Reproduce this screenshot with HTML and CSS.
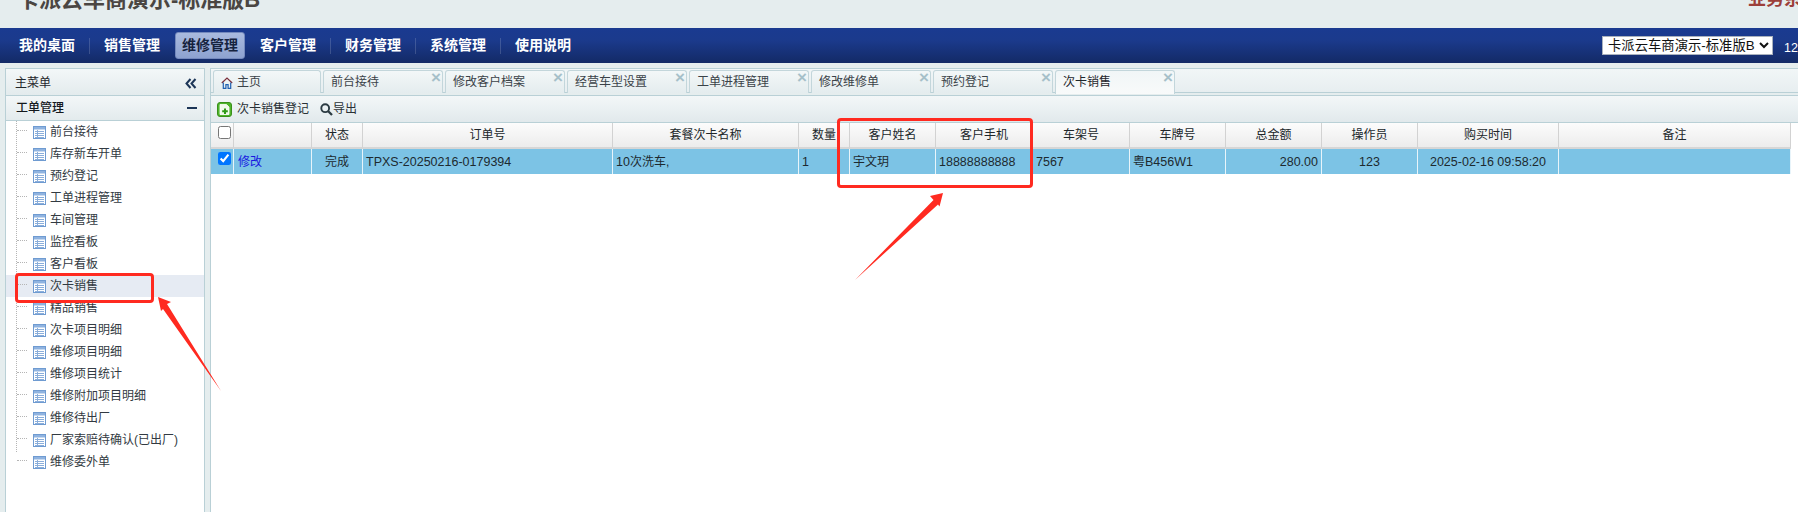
FILE: index.html
```html
<!DOCTYPE html>
<html lang="zh-CN">
<head>
<meta charset="utf-8">
<title>次卡销售</title>
<link rel="stylesheet" href="styles.css">
</head>
<body>
<svg class="defs" width="0" height="0" aria-hidden="true">
  <symbol id="grid" viewBox="0 0 13 13">
    <rect x="0.5" y="0.5" width="12" height="12" fill="#fff" stroke="#6f9bd1"/>
    <rect x="1" y="1" width="11" height="2.5" fill="#8fb3e0"/>
    <path d="M2 5.5h9M2 7.5h9M2 9.5h9M2 11.5h9M4.5 4v8" stroke="#8aaedb" stroke-width="1" fill="none"/>
  </symbol>
</svg>

<header class="top">
  <div class="brand">卡派云车商演示-标准版B</div>
  <div class="system">业务系统</div>
</header>

<nav class="nav">
  <div class="nav-links">
    <a class="nav-item">我的桌面</a><i class="nav-sep"></i>
    <a class="nav-item">销售管理</a>
    <a class="nav-item active">维修管理</a>
    <a class="nav-item">客户管理</a><i class="nav-sep"></i>
    <a class="nav-item">财务管理</a><i class="nav-sep"></i>
    <a class="nav-item">系统管理</a><i class="nav-sep"></i>
    <a class="nav-item">使用说明</a>
  </div>
  <div class="nav-right">
    <select class="shop"><option>卡派云车商演示-标准版B</option></select>
    <span class="user">123</span>
  </div>
</nav>

<div class="content">
  <aside class="side">
    <div class="side-head">
      <span>主菜单</span>
      <svg class="collapse" width="12" height="11" viewBox="0 0 12 11"><path d="M5.5 1 1.5 5.5 5.5 10M10.5 1 6.5 5.5 10.5 10" fill="none" stroke="#1c3557" stroke-width="2"/></svg>
    </div>
    <div class="side-group">
      <span>工单管理</span>
      <i class="minus"></i>
    </div>
    <ul class="tree">
      <li><svg class="ico"><use href="#grid"/></svg>前台接待</li>
      <li><svg class="ico"><use href="#grid"/></svg>库存新车开单</li>
      <li><svg class="ico"><use href="#grid"/></svg>预约登记</li>
      <li><svg class="ico"><use href="#grid"/></svg>工单进程管理</li>
      <li><svg class="ico"><use href="#grid"/></svg>车间管理</li>
      <li><svg class="ico"><use href="#grid"/></svg>监控看板</li>
      <li><svg class="ico"><use href="#grid"/></svg>客户看板</li>
      <li class="current"><svg class="ico"><use href="#grid"/></svg>次卡销售</li>
      <li><svg class="ico"><use href="#grid"/></svg>精品销售</li>
      <li><svg class="ico"><use href="#grid"/></svg>次卡项目明细</li>
      <li><svg class="ico"><use href="#grid"/></svg>维修项目明细</li>
      <li><svg class="ico"><use href="#grid"/></svg>维修项目统计</li>
      <li><svg class="ico"><use href="#grid"/></svg>维修附加项目明细</li>
      <li><svg class="ico"><use href="#grid"/></svg>维修待出厂</li>
      <li><svg class="ico"><use href="#grid"/></svg>厂家索赔待确认(已出厂)</li>
      <li><svg class="ico"><use href="#grid"/></svg>维修委外单</li>
    </ul>
  </aside>

  <main class="main">
    <div class="tabs">
      <div class="tab home">
        <svg width="12" height="12" viewBox="0 0 12 12"><path d="M0.8 6 6 1l5.2 5" fill="none" stroke="#7a2e3a" stroke-width="1.2"/><path d="M2.3 5.5v5.8h2.6V7.6h2.2v3.700h2.600V5.500" fill="none" stroke="#1f5fb0" stroke-width="1.2"/></svg>
        <span>主页</span>
      </div>
      <div class="tab">前台接待<b class="x">×</b></div>
      <div class="tab">修改客户档案<b class="x">×</b></div>
      <div class="tab">经营车型设置<b class="x">×</b></div>
      <div class="tab">工单进程管理<b class="x">×</b></div>
      <div class="tab">修改维修单<b class="x">×</b></div>
      <div class="tab">预约登记<b class="x">×</b></div>
      <div class="tab on">次卡销售<b class="x">×</b></div>
    </div>
    <div class="band"></div>
    <div class="toolbar">
      <svg class="add" width="15" height="15" viewBox="0 0 15 15">
        <rect x="0.5" y="0.5" width="14" height="14" rx="2.5" fill="#4fb52b" stroke="#3a8f1c"/>
        <path d="M3 2.500h6.500l2.500 2.500v7.500H3z" fill="#f1faec" stroke="#fff" stroke-width="0.8"/>
        <path d="M8 6.500v5.500M5.200 9.200h5.600" stroke="#2f9a17" stroke-width="2"/>
      </svg>
      <span class="tool-label">次卡销售登记</span>
      <svg class="search" width="13" height="13" viewBox="0 0 13 13"><circle cx="5.2" cy="5.2" r="3.9" fill="none" stroke="#2b3a42" stroke-width="1.9"/><path d="M8 8l4 4" stroke="#2b3a42" stroke-width="2.3"/></svg>
      <span>导出</span>
    </div>
    <table class="grid">
      <colgroup>
        <col class="w23"><col class="w78"><col class="w51"><col class="w250"><col class="w186"><col class="w51"><col class="w86"><col class="w97"><col class="w97"><col class="w96"><col class="w96"><col class="w96"><col class="w141"><col class="w232">
      </colgroup>
      <thead>
        <tr>
          <th class="chk"><input type="checkbox"></th>
          <th></th><th>状态</th><th>订单号</th><th>套餐次卡名称</th><th>数量</th><th>客户姓名</th><th>客户手机</th><th>车架号</th><th>车牌号</th><th>总金额</th><th>操作员</th><th>购买时间</th><th>备注</th>
        </tr>
      </thead>
      <tbody>
        <tr>
          <td class="chk"><input type="checkbox" checked></td>
          <td class="link">修改</td>
          <td class="mid">完成</td>
          <td class="lat">TPXS-20250216-0179394</td>
          <td><span class="lat">10</span>次洗车,</td>
          <td class="lat">1</td>
          <td>宇文玥</td>
          <td class="lat">18888888888</td>
          <td class="lat">7567</td>
          <td>粤<span class="lat">B456W1</span></td>
          <td class="lat end">280.00</td>
          <td class="lat mid">123</td>
          <td class="lat mid">2025-02-16 09:58:20</td>
          <td></td>
        </tr>
      </tbody>
    </table>
  </main>
</div>

<div class="mark mark-side"></div>
<div class="mark mark-cols"></div>
<svg class="arrows" width="1798" height="512" viewBox="0 0 1798 512" aria-hidden="true">
  <path d="M158 297 171 302 167 304 221 391 163 309 161 311Z" fill="#ff2a20"/>
  <path d="M943 193 930 196 933.500 200 855 280 938 204.500 939.500 206.500Z" fill="#ff2a20"/>
</svg>
</body>
</html>
```
FILE: styles.css
```css
* { box-sizing: border-box; }
html, body { margin: 0; height: 512px; overflow: hidden; }
body {
  position: relative;
  display: flex;
  flex-direction: column;
  background: #e5edee;
  color: #2a3136;
  font: 12px/1.2 "Liberation Sans", "Noto Sans CJK SC", sans-serif;
}
.defs { position: absolute; }

.top {
  flex: 0 0 28px;
  display: flex;
  justify-content: space-between;
  overflow: hidden;
  padding-left: 17px;
  background: #e5edee;
  font-weight: 700;
  white-space: nowrap;
}
.brand { margin-top: -15px; font-size: 22px; line-height: 30px; color: #4a4642; }
.system { margin-top: -16px; margin-right: -22px; font-size: 18px; line-height: 30px; color: #9c3f3a; }

.nav {
  flex: 0 0 35px;
  display: flex;
  justify-content: space-between;
  align-items: center;
  padding-left: 12px;
  overflow: hidden;
  background: linear-gradient(#1a3a90 0%, #1b3a8c 35%, #132a66 100%);
}
.nav-links { display: flex; align-items: center; gap: 7px; }
.nav-item {
  width: 70px;
  height: 27px;
  border: 1px solid transparent;
  border-radius: 3px;
  color: #fff;
  font-size: 14px;
  font-weight: 700;
  line-height: 25px;
  text-align: center;
}
.nav-item.active {
  margin: 0 1px;
  background: linear-gradient(#a9bade, #8da2d0);
  border-color: #7489bd;
  color: #16233f;
}
.nav-sep { width: 1px; height: 16px; background: rgba(255, 255, 255, .16); }
.nav-right { width: 196px; flex: none; display: flex; align-items: center; gap: 11px; }
.shop {
  flex: none;
  width: 171px;
  height: 19px;
  padding: 0 0 0 1px;
  border: 1px solid #a9b1bd;
  border-radius: 0;
  background-color: #fff;
  color: #111;
  font: 13.33px "Liberation Sans", "Noto Sans CJK SC", sans-serif;
}
.user { flex: none; margin-top: 5px; color: #fff; font-size: 12.5px; }

.content { flex: 1; display: flex; gap: 5px; padding: 5px 0 0 5px; min-height: 0; }

.side {
  flex: 0 0 200px;
  border: 1px solid #b9d0d6;
  border-bottom: 0;
  background: #fff;
}
.side-head, .side-group {
  display: flex;
  justify-content: space-between;
  align-items: center;
  background: linear-gradient(#f3f7f8, #e3ebed);
  border-bottom: 1px solid #b9d0d6;
}
.side-head { height: 27px; padding: 2px 7px 0 9px; color: #1f262b; }
.side-group { height: 25px; padding: 0 7px 0 10px; font-size: 12px; font-weight: 500; color: #14191d; }
.minus { width: 10px; height: 2px; background: #1c3557; }

.tree {
  position: relative;
  margin: 0;
  padding: 0;
  list-style: none;
}
.tree::before {
  content: "";
  position: absolute;
  left: 10px;
  top: 0;
  height: 331px;
  border-left: 1px dotted #b5b5b5;
}
.tree li {
  position: relative;
  display: flex;
  align-items: center;
  height: 22px;
  padding: 1px 0 0 27px;
  color: #323a42;
}
.tree li::before {
  content: "";
  position: absolute;
  left: 11px;
  top: 9px;
  width: 10px;
  border-top: 1px dotted #b5b5b5;
}
.tree li.current { background: #e6ebf3; }
.ico { flex: none; width: 13px; height: 13px; margin-right: 4px; }

.main {
  flex: 1;
  min-width: 0;
  border-left: 1px solid #b9d0d6;
  border-top: 1px solid #b9d0d6;
  background: #fff;
}
.tabs {
  display: flex;
  gap: 2px;
  height: 24px;
  padding: 1px 0 0 2px;
  background: linear-gradient(#f1f6f7, #e7eef0);
  border-bottom: 1px solid #b9d0d6;
}
.tab {
  position: relative;
  flex: 0 0 120px;
  height: 23px;
  padding: 4px 0 0 7px;
  border: 1px solid #c3d6db;
  border-bottom: 0;
  border-radius: 3px 3px 0 0;
  background: linear-gradient(#f3f7f8, #e4ecee);
  color: #3a4248;
}
.tab.home { flex-basis: 108px; display: flex; align-items: flex-start; gap: 4px; }
.tab.home svg { margin-top: 2px; }
.tab.on { height: 24px; background: linear-gradient(#f1f6f7, #f8fafa); color: #1e262b; }
.x {
  position: absolute;
  right: 1px;
  top: -1px;
  color: #a6c0c9;
  font-size: 17px;
  font-weight: 700;
  line-height: 15px;
}
.band { height: 2px; background: #e5edee; }
.toolbar {
  display: flex;
  align-items: center;
  height: 28px;
  padding: 1px 0 0 6px;
  border-top: 1px solid #b9d0d6;
  border-bottom: 1px solid #b9d0d6;
  background: linear-gradient(#f3f7f8, #e1e9ec);
  color: #2a3136;
}
.add { margin-right: 5px; }
.tool-label { margin-right: 11px; }

.grid { width: 1579px; table-layout: fixed; border-collapse: separate; border-spacing: 0; }
.w23 { width: 23px; }
.w78 { width: 78px; }
.w51 { width: 51px; }
.w250 { width: 250px; }
.w186 { width: 186px; }
.w86 { width: 86px; }
.w97 { width: 97px; }
.w96 { width: 96px; }
.w141 { width: 141px; }
.w232 { width: 232px; }
.grid th {
  height: 26px;
  padding: 1px 0 0;
  border-right: 1px solid #d2d2d2;
  border-bottom: 2px solid #d6d6d6;
  background: linear-gradient(#fcfcfc, #ececec);
  color: #20262a;
  font-weight: 400;
}
.grid td {
  height: 25px;
  padding: 1px 3px 0;
  border-right: 1px solid #e8f4fa;
  background: #7cc3e5;
  color: #1d2a30;
  white-space: nowrap;
}
.grid td.lat, .lat { font-size: 12.5px; }
.grid .chk { padding: 0; vertical-align: top; }
.chk input { display: block; width: 13px; height: 13px; margin: 3px 0 0 7px; }
.grid td.link { padding-left: 4px; color: #1818e0; }
.grid td.mid { text-align: center; }
.grid td.end { text-align: right; padding-right: 3px; }

.mark {
  position: absolute;
  border: 3px solid #ff2a20;
  border-radius: 4px;
}
.mark-side { left: 15px; top: 273px; width: 139px; height: 30px; }
.mark-cols { left: 837px; top: 118px; width: 196px; height: 70px; }
.arrows { position: absolute; left: 0; top: 0; pointer-events: none; }
```
